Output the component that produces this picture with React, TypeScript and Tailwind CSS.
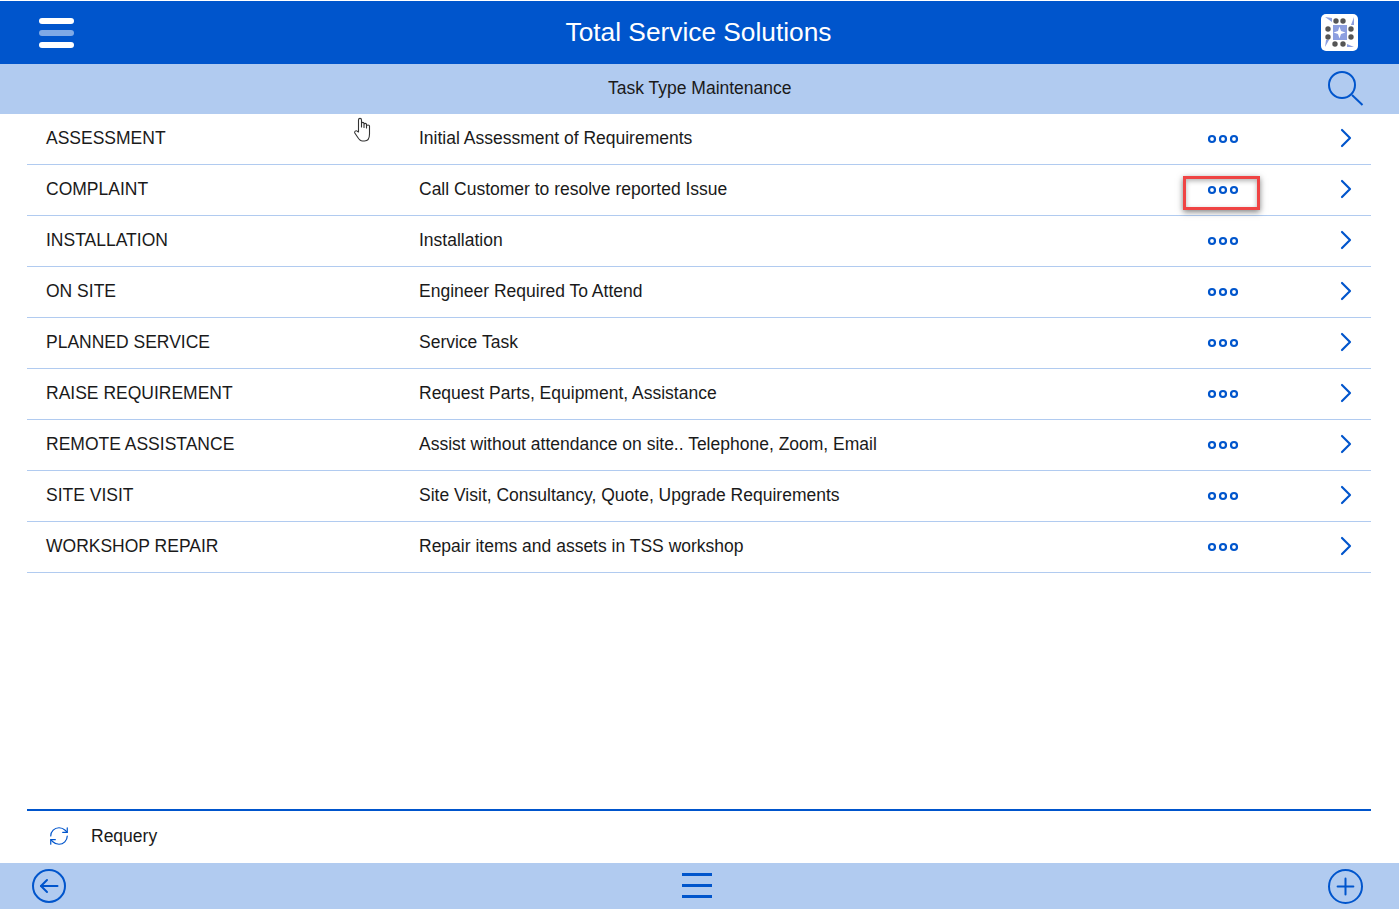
import { ChevronRight, Plus, RefreshCw } from "lucide-react";

const TASK_TYPES = [
  { code: "ASSESSMENT", description: "Initial Assessment of Requirements" },
  { code: "COMPLAINT", description: "Call Customer to resolve reported Issue" },
  { code: "INSTALLATION", description: "Installation" },
  { code: "ON SITE", description: "Engineer Required To Attend" },
  { code: "PLANNED SERVICE", description: "Service Task" },
  { code: "RAISE REQUIREMENT", description: "Request Parts, Equipment, Assistance" },
  { code: "REMOTE ASSISTANCE", description: "Assist without attendance on site.. Telephone, Zoom, Email" },
  { code: "SITE VISIT", description: "Site Visit, Consultancy, Quote, Upgrade Requirements" },
  { code: "WORKSHOP REPAIR", description: "Repair items and assets in TSS workshop" },
];

function Logo() {
  return (
    <svg width="37" height="37" viewBox="0 0 37 37">
      <rect width="37" height="37" rx="5" fill="#ffffff" />
      <rect x="12" y="11" width="14" height="15" fill="#8d9fe0" />
      <path d="M18.5 12.5 L20 17 L24.5 18.5 L20 20 L18.5 24.5 L17 20 L12.5 18.5 L17 17 Z" fill="#ffffff" />
      <path d="M4 3 L11 4 L11 8 Z M33 3 L33 11 L30 11 Z M33 33 L26 33 L26 30 Z M4 33 L5 26 L8 26 Z" fill="#8d9fe0" />
      {[
        [15, 7], [22, 7], [14, 30], [22, 30],
        [7, 15], [7, 23], [30, 15], [30, 23],
      ].map(([cx, cy]) => (
        <circle key={`${cx}:${cy}`} cx={cx} cy={cy} r="2.7" fill="#555555" />
      ))}
    </svg>
  );
}

function MoreDots() {
  return (
    <svg width="32" height="10" viewBox="0 0 32 10" fill="none" stroke="#0055cc" strokeWidth="2.2">
      <circle cx="5" cy="5" r="3" />
      <circle cx="16" cy="5" r="3" />
      <circle cx="27" cy="5" r="3" />
    </svg>
  );
}

function SearchIcon() {
  return (
    <svg className="mb-[2px]" width="37" height="36" viewBox="0 0 37 36" fill="none" stroke="#0055cc" strokeWidth="2">
      <circle cx="15" cy="15" r="13" />
      <path d="M25 25 L35.5 35" />
    </svg>
  );
}

function BackIcon() {
  return (
    <svg width="24" height="24" viewBox="0 0 24 24" fill="none" stroke="#0055cc" strokeWidth="2" strokeLinecap="round" strokeLinejoin="round">
      <path d="M4 12 L20.5 12" />
      <path d="M10 6 L4 12 L10 18" />
    </svg>
  );
}

function HandCursor() {
  return (
    <svg
      className="absolute left-[326px] top-[3px]"
      width="20"
      height="26"
      viewBox="0 0 20 26"
      fill="#ffffff"
      stroke="#333333"
      strokeWidth="1.1"
      strokeLinejoin="round"
    >
      <path d="M5.5 15 L5.5 3 C5.5 0.8 8.5 0.8 8.5 3 L8.5 10 L8.5 6.5 C8.5 5 11 5 11 6.5 L11 10.5 L11 7.5 C11 6 13.5 6 13.5 7.5 L13.5 11 L13.5 9 C13.5 7.6 16.5 7.6 16.5 9 L16.5 17 C16.5 21 15 24 11.5 24 L9.5 24 C7 24 6 22.5 4.5 20 L1.8 16 C1 14.5 3 13 4.3 14.2 Z" />
    </svg>
  );
}

export default function App() {
  return (
    <div className="flex h-[909px] flex-col bg-white font-['Liberation_Sans',Arial,sans-serif] text-[17.5px] text-[#1a1a1a]">
      <header className="mt-px flex h-[63px] shrink-0 items-center justify-between bg-[#0055cc] pl-[39px] pr-[41px]">
        <div className="flex w-[35px] flex-col gap-[6px]">
          <div className="h-[6px] rounded-full bg-white" />
          <div className="h-[6px] rounded-full bg-[#7fa9e6]" />
          <div className="h-[6px] rounded-full bg-white" />
        </div>
        <h1 className="ml-[2px] text-[26.3px] text-white">Total Service Solutions</h1>
        <Logo />
      </header>

      <div className="flex h-[50px] shrink-0 items-center justify-between bg-[#b1cbf0] pl-[608px] pr-[35px]">
        <span className="pb-[2px]">Task Type Maintenance</span>
        <SearchIcon />
      </div>

      <main className="relative ml-[27px] mr-[28px] flex min-h-0 flex-1 flex-col">
        <HandCursor />
        {TASK_TYPES.map((task) => (
          <div key={task.code} className="flex h-[51px] shrink-0 items-center border-b border-[#b1cbf0]">
            <span className="w-[392px] shrink-0 pb-[2px] pl-[19px]">{task.code}</span>
            <span className="min-w-0 flex-1 pb-[2px]">{task.description}</span>
            <div className="relative flex h-[33px] w-[76px] shrink-0 items-center justify-center">
              {task.code === "COMPLAINT" ? (
                <div className="absolute -left-[2px] top-[2px] h-[34px] w-[77px] border-[3px] border-[#ef4444] shadow-[0_2px_6px_rgba(0,0,0,0.5),inset_0_2px_5px_rgba(0,0,0,0.3)]" />
              ) : null}
              <MoreDots />
            </div>
            <div className="ml-[60px] flex w-[50px] shrink-0 justify-center pb-[2px]">
              <ChevronRight size={32} strokeWidth={1.6} color="#0055cc" />
            </div>
          </div>
        ))}
      </main>

      <div className="ml-[27px] mr-[28px] flex h-[54px] shrink-0 items-center border-t-2 border-[#0055cc] pb-[2px] pl-[21px]">
        <RefreshCw size={22} strokeWidth={1.3} color="#0055cc" />
        <span className="ml-[21px]">Requery</span>
      </div>

      <footer className="flex h-[46px] shrink-0 items-center justify-between bg-[#b1cbf0] pl-[32px] pr-[36px]">
        <div className="flex size-[34px] items-center justify-center rounded-full border-2 border-[#0055cc]">
          <BackIcon />
        </div>
        <div className="mb-px flex w-[30px] flex-col gap-[8.5px]">
          <div className="h-[2.5px] bg-[#0055cc]" />
          <div className="h-[2.5px] bg-[#0055cc]" />
          <div className="h-[2.5px] bg-[#0055cc]" />
        </div>
        <div className="flex size-[35px] items-center justify-center rounded-full border-2 border-[#0055cc]">
          <Plus size={27} strokeWidth={1.8} color="#0055cc" />
        </div>
      </footer>
    </div>
  );
}
